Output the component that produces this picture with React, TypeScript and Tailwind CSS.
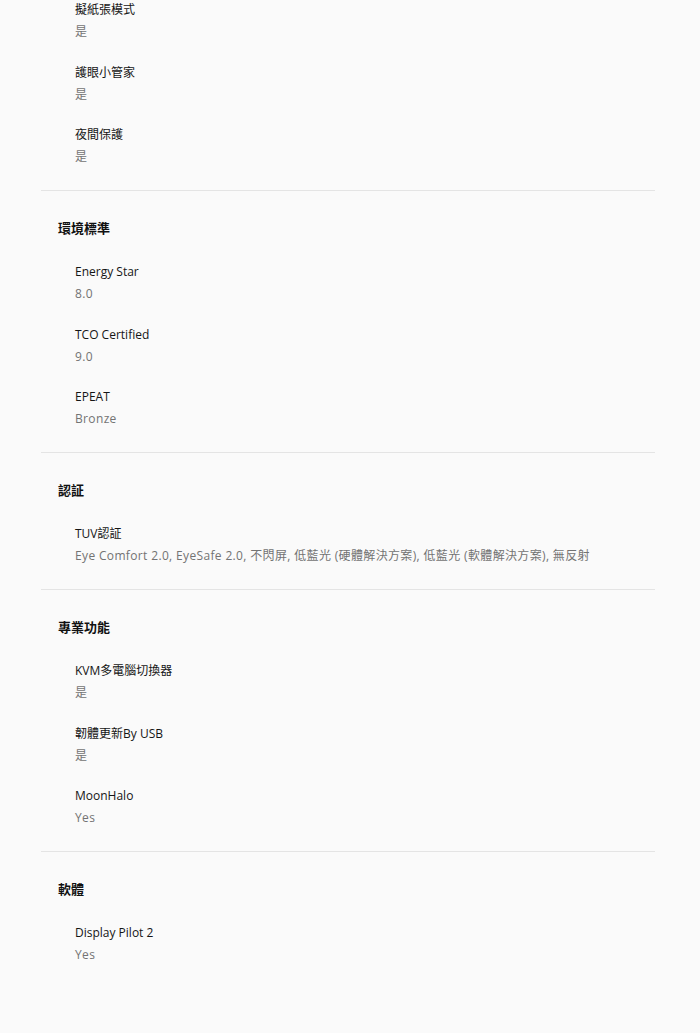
import React from "react";

type Item = { label: string; value: string };
type Section = { title?: string; items: Item[] };

const sections: Section[] = [
  {
    items: [
      { label: "擬紙張模式", value: "是" },
      { label: "護眼小管家", value: "是" },
      { label: "夜間保護", value: "是" },
    ],
  },
  {
    title: "環境標準",
    items: [
      { label: "Energy Star", value: "8.0" },
      { label: "TCO Certified", value: "9.0" },
      { label: "EPEAT", value: "Bronze" },
    ],
  },
  {
    title: "認証",
    items: [
      {
        label: "TUV認証",
        value:
          "Eye Comfort 2.0, EyeSafe 2.0, 不閃屏, 低藍光 (硬體解決方案), 低藍光 (軟體解決方案), 無反射",
      },
    ],
  },
  {
    title: "專業功能",
    items: [
      { label: "KVM多電腦切換器", value: "是" },
      { label: "韌體更新By USB", value: "是" },
      { label: "MoonHalo", value: "Yes" },
    ],
  },
  {
    title: "軟體",
    items: [{ label: "Display Pilot 2", value: "Yes" }],
  },
];

export default function App() {
  return (
    <div
      className="min-h-[1033px] w-[700px] bg-[#fafafa] overflow-hidden"
      style={{ fontFamily: '"Open Sans", "Noto Sans CJK TC", sans-serif' }}
    >
      <div className="ml-[41px] mr-[45px] mt-[-1px]">
        {sections.map((s, i) => (
          <div
            key={i}
            className={
              (i > 0 ? "border-t border-[#e4e4e4] pt-[25px] " : "") +
              (i < sections.length - 1 ? "pb-[22px]" : "")
            }
          >
            {s.title && (
              <div className="pl-[17px] text-[13px] leading-[24px] font-bold text-[#111] mb-[21px]">
                {s.title}
              </div>
            )}
            <div className="flex flex-col gap-[18.5px] pl-[34px]">
              {s.items.map((it, j) => (
                <div key={j} className="flex flex-col">
                  <div className="text-[12px] leading-[22px] text-[#151515]">{it.label}</div>
                  <div className="text-[12px] leading-[22px] tracking-[0.35px] text-[#737373]">
                    {it.value}
                  </div>
                </div>
              ))}
            </div>
          </div>
        ))}
      </div>
    </div>
  );
}
